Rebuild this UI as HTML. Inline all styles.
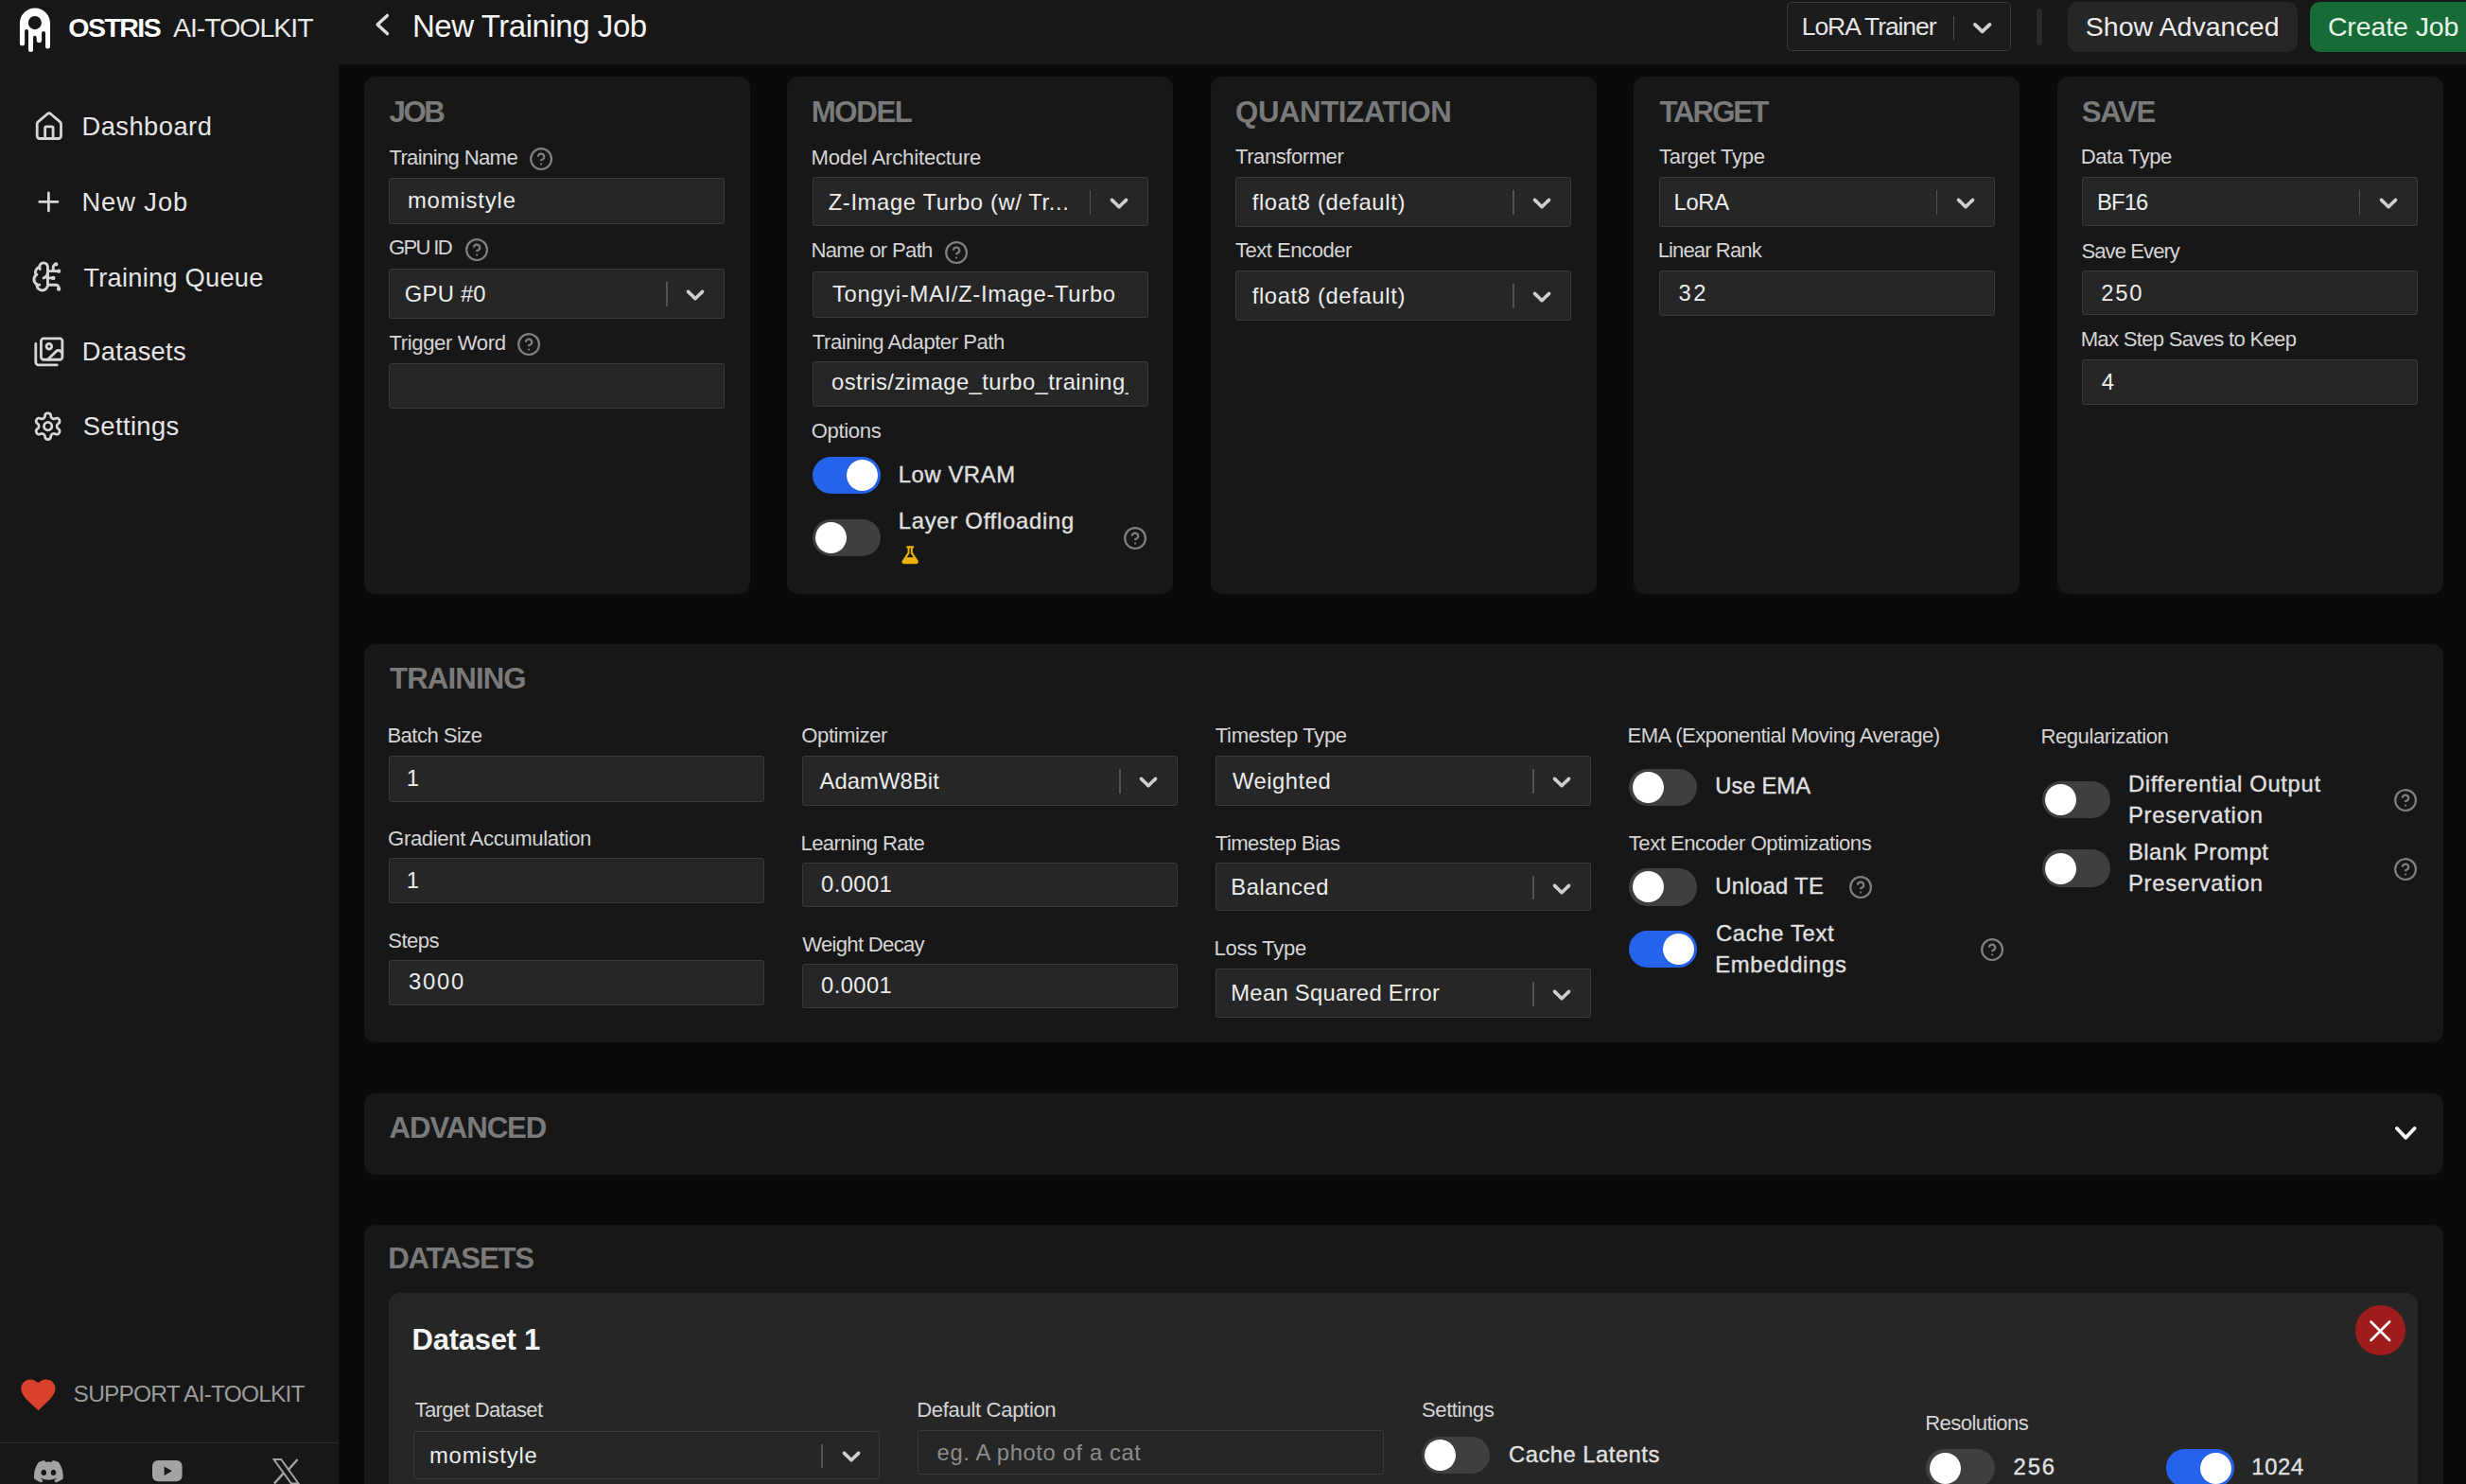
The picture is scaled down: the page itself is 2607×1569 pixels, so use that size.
<!DOCTYPE html>
<html><head><meta charset="utf-8"><title>New Training Job</title>
<style>
html,body{margin:0;padding:0;width:2607px;height:1569px;overflow:hidden;background:#0a0a0a;}
body{position:relative;font-family:"Liberation Sans",sans-serif;}
.t{position:absolute;white-space:nowrap;}
.r{position:absolute;box-sizing:border-box;}
.s{position:absolute;overflow:visible;}
</style></head><body>
<div class="r" style="left:0px;top:0px;width:2607px;height:68px;background:#171717"></div>
<div class="r" style="left:0px;top:68px;width:358px;height:1501px;background:#171717"></div>
<div class="r" style="left:358px;top:68px;width:2249px;height:1501px;background:#0a0a0a"></div>
<svg class="s" style="left:15px;top:5px;" width="50" height="55" viewBox="0 0 1349 1484"><path fill="#fff" d="M160 1100 L160 527 A432.5 432.5 0 0 1 1025 527 L1025 1188 A67.5 67.5 0 0 1 890 1188 L890 807 A52.5 52.5 0 0 0 785 807 L785 1013 A72.5 72.5 0 0 1 640 1013 L640 935 A50 50 0 0 0 540 935 L540 1282 A67.5 67.5 0 0 1 405 1282 L405 757 A52.5 52.5 0 0 0 300 757 L300 1100 A70 70 0 0 1 160 1100 Z"/><circle cx="590" cy="515" r="190" fill="#171717"/></svg>
<span class="t" style="left:72.36px;top:15.27px;font-size:28.5px;line-height:28.5px;color:#ffffff;font-weight:700;letter-spacing:-1.56px">OSTRIS</span>
<span class="t" style="left:182.93px;top:15.27px;font-size:28.5px;line-height:28.5px;color:#e8e8e8;letter-spacing:-1.01px">AI-TOOLKIT</span>
<svg class="s" style="left:390px;top:10px;fill:none;stroke:#dcdcdc;stroke-width:3.4;stroke-linecap:round;stroke-linejoin:round" width="28" height="30" viewBox="0 0 28 30"><path d="M19.4 6.4 9.1 16.1 19.4 25.6"/></svg>
<span class="t" style="left:435.98px;top:11.47px;font-size:33px;line-height:33px;color:#f5f5f5;letter-spacing:-0.45px">New Training Job</span>
<div class="r" style="left:1889.4px;top:2.4px;width:236.3px;height:52.1px;background:#1c1c1c;border:1px solid #3a3a3a;border-radius:5px"></div>
<span class="t" style="left:1904.81px;top:15.47px;font-size:26.5px;line-height:26.5px;color:#e5e5e5;letter-spacing:-1.09px">LoRA Trainer</span>
<div class="r" style="left:2064.5px;top:16.7px;width:1.8px;height:25.7px;background:#525252"></div>
<svg class="s" style="left:2078.84px;top:12.49px;fill:#cfcfcf" width="33.4" height="33.4" viewBox="0 0 20 20"><path d="M4.516 7.548c0.436-0.446 1.043-0.481 1.576 0l3.908 3.747 3.908-3.747c0.533-0.481 1.141-0.446 1.574 0 0.436 0.445 0.408 1.197 0 1.615-0.406 0.418-4.695 4.502-4.695 4.502-0.217 0.223-0.502 0.335-0.787 0.335s-0.57-0.112-0.789-0.335c0 0-4.287-4.084-4.695-4.502s-0.436-1.17 0-1.615z"/></svg>
<div class="r" style="left:2153px;top:9px;width:6px;height:39px;background:#2a2a2a;border-radius:3px"></div>
<div class="r" style="left:2186.3px;top:2.2px;width:242.7px;height:52.8px;background:#262626;border-radius:11px"></div>
<span class="t" style="left:2204.72px;top:13.97px;font-size:28.5px;line-height:28.5px;color:#ececec;letter-spacing:0.03px">Show Advanced</span>
<div class="r" style="left:2442.2px;top:2.2px;width:197.8px;height:52.8px;background:#176b36;border-radius:11px"></div>
<span class="t" style="left:2460.88px;top:13.97px;font-size:28.5px;line-height:28.5px;color:#e6f4e8;letter-spacing:-0.1px">Create Job</span>
<svg class="s" style="left:34.79px;top:116.89px;fill:none;stroke:#d6d6d6;stroke-width:2;stroke-linecap:round;stroke-linejoin:round" width="33.71" height="33.71" viewBox="0 0 24 24"><path d="M15 21v-8a1 1 0 0 0-1-1h-4a1 1 0 0 0-1 1v8"/><path d="M3 10a2 2 0 0 1 .709-1.528l7-5.999a2 2 0 0 1 2.582 0l7 5.999A2 2 0 0 1 21 10v9a2 2 0 0 1-2 2H5a2 2 0 0 1-2-2z"/></svg>
<span class="t" style="left:86.45px;top:120.49px;font-size:27.3px;line-height:27.3px;color:#e5e5e5;letter-spacing:0.48px">Dashboard</span>
<svg class="s" style="left:34.94px;top:197.34px;fill:none;stroke:#d6d6d6;stroke-width:2;stroke-linecap:round;stroke-linejoin:round" width="32.78" height="32.78" viewBox="0 0 24 24"><path d="M5 12h14"/><path d="M12 5v14"/></svg>
<span class="t" style="left:86.45px;top:200.29px;font-size:27.3px;line-height:27.3px;color:#e5e5e5;letter-spacing:0.92px">New Job</span>
<svg class="s" style="left:33.09px;top:274.82px;fill:none;stroke:#d6d6d6;stroke-width:2;stroke-linecap:round;stroke-linejoin:round" width="34.91" height="34.91" viewBox="0 0 24 24"><path d="M12 5a3 3 0 1 0-5.997.125 4 4 0 0 0-2.526 5.77 4 4 0 0 0 .556 6.588A4 4 0 1 0 12 18Z"/><path d="M9 13a4.5 4.5 0 0 0 3-4"/><path d="M6.003 5.125A3 3 0 0 0 6.401 6.5"/><path d="M3.477 10.896a4 4 0 0 1 .585-.396"/><path d="M6 18a4 4 0 0 1-1.967-.516"/><path d="M12 13h4"/><path d="M12 18h6a2 2 0 0 1 2 2v1"/><path d="M12 8h8"/><path d="M16 8V5a2 2 0 0 1 2-2"/><circle cx="16" cy="13" r=".5"/><circle cx="18" cy="3" r=".5"/><circle cx="20" cy="21" r=".5"/><circle cx="20" cy="8" r=".5"/></svg>
<span class="t" style="left:88.39px;top:279.59px;font-size:27.3px;line-height:27.3px;color:#e5e5e5;letter-spacing:0.22px">Training Queue</span>
<svg class="s" style="left:34.6px;top:354.6px;fill:none;stroke:#d6d6d6;stroke-width:2;stroke-linecap:round;stroke-linejoin:round" width="33.71" height="33.71" viewBox="0 0 24 24"><path d="M18 22H4a2 2 0 0 1-2-2V6"/><path d="m22 13-1.296-1.296a2.41 2.41 0 0 0-3.408 0L11 18"/><circle cx="12" cy="8" r="2"/><rect width="16" height="16" x="6" y="2" rx="2"/></svg>
<span class="t" style="left:86.75px;top:358.49px;font-size:27.3px;line-height:27.3px;color:#e5e5e5;letter-spacing:0.31px">Datasets</span>
<svg class="s" style="left:34.45px;top:434.01px;fill:none;stroke:#d6d6d6;stroke-width:2;stroke-linecap:round;stroke-linejoin:round" width="33.27" height="33.27" viewBox="0 0 24 24"><path d="M12.22 2h-.44a2 2 0 0 0-2 2v.18a2 2 0 0 1-1 1.73l-.43.25a2 2 0 0 1-2 0l-.15-.08a2 2 0 0 0-2.73.73l-.22.38a2 2 0 0 0 .73 2.73l.15.1a2 2 0 0 1 1 1.72v.51a2 2 0 0 1-1 1.74l-.15.09a2 2 0 0 0-.73 2.73l.22.38a2 2 0 0 0 2.73.73l.15-.08a2 2 0 0 1 2 0l.43.25a2 2 0 0 1 1 1.73V20a2 2 0 0 0 2 2h.44a2 2 0 0 0 2-2v-.18a2 2 0 0 1 1-1.73l.43-.25a2 2 0 0 1 2 0l.15.08a2 2 0 0 0 2.73-.73l.22-.39a2 2 0 0 0-.73-2.73l-.15-.08a2 2 0 0 1-1-1.74v-.5a2 2 0 0 1 1-1.74l.15-.09a2 2 0 0 0 .73-2.73l-.22-.38a2 2 0 0 0-2.73-.73l-.15.08a2 2 0 0 1-2 0l-.43-.25a2 2 0 0 1-1-1.73V4a2 2 0 0 0-2-2z"/><circle cx="12" cy="12" r="3"/></svg>
<span class="t" style="left:87.77px;top:437.19px;font-size:27.3px;line-height:27.3px;color:#e5e5e5;letter-spacing:0.39px">Settings</span>
<svg class="s" style="left:22.4px;top:1457.5px;" width="36.8" height="34" viewBox="0 0 24 22"><path d="M12 21.6 10.3 20C4.2 14.5 0.2 10.9 0.2 6.5 0.2 2.9 3 0.2 6.6 0.2c2 0 3.9.9 5.4 2.4C13.5 1.1 15.4.2 17.4.2 21 .2 23.8 2.9 23.8 6.5c0 4.4-4 8-10.1 13.5Z" fill="#d9412e"/></svg>
<span class="t" style="left:77.6px;top:1462.46px;font-size:24.5px;line-height:24.5px;color:#9c9c9c;letter-spacing:-0.81px">SUPPORT AI-TOOLKIT</span>
<div class="r" style="left:0px;top:1524.5px;width:358px;height:1.3px;background:#2c2c2c"></div>
<svg class="s" style="left:36px;top:1543.5px;" width="30.8" height="23.5" viewBox="0 0 127.14 96.36"><path fill="#a3a3a3" d="M107.7 8.07A105.15 105.15 0 0 0 81.47 0a72.06 72.06 0 0 0-3.36 6.83 97.68 97.68 0 0 0-29.11 0A72.37 72.37 0 0 0 45.64 0a105.89 105.89 0 0 0-26.25 8.09C2.79 32.65-1.71 56.6.54 80.21a105.73 105.73 0 0 0 32.17 16.15 77.7 77.7 0 0 0 6.89-11.11 68.42 68.42 0 0 1-10.85-5.18c.91-.66 1.8-1.34 2.66-2a75.57 75.57 0 0 0 64.32 0c.87.71 1.76 1.39 2.66 2a68.68 68.68 0 0 1-10.87 5.19 77 77 0 0 0 6.89 11.1 105.25 105.25 0 0 0 32.19-16.14c2.64-27.38-4.51-51.11-18.9-72.15ZM42.45 65.69C36.18 65.69 31 60 31 53s5-12.74 11.43-12.74S54 46 53.89 53s-5.05 12.69-11.44 12.69Zm42.24 0C78.41 65.69 73.25 60 73.25 53s5-12.74 11.44-12.74S96.23 46 96.12 53s-5.04 12.69-11.43 12.69Z"/></svg>
<svg class="s" style="left:160.6px;top:1544.4px;" width="31.6" height="22.3" viewBox="0 0 32 22.4"><rect x="0" y="0" width="32" height="22.4" rx="6" fill="#a3a3a3"/><path d="M12.8 6.4 21.2 11.2 12.8 16Z" fill="#171717"/></svg>
<svg class="s" style="left:288px;top:1541.6px;" width="29" height="27.4" viewBox="0 0 24 22.7"><path fill="none" stroke="#a3a3a3" stroke-width="1.6" d="M1.2 0.8h6.4l15.2 21.1h-6.4Z"/><path stroke="#a3a3a3" stroke-width="2" d="M22 0.8 13.6 10.3M1.6 22 10 12.5"/></svg>
<div class="r" style="left:385px;top:81px;width:408px;height:546.6px;background:#171717;border-radius:12px"></div>
<div class="r" style="left:832.2px;top:81px;width:408px;height:546.6px;background:#171717;border-radius:12px"></div>
<div class="r" style="left:1280px;top:81px;width:408px;height:546.6px;background:#171717;border-radius:12px"></div>
<div class="r" style="left:1727.3px;top:81px;width:408px;height:546.6px;background:#171717;border-radius:12px"></div>
<div class="r" style="left:2174.8px;top:81px;width:408px;height:546.6px;background:#171717;border-radius:12px"></div>
<span class="t" style="left:411.43px;top:102.59px;font-size:31.2px;line-height:31.2px;color:#7a7a7a;font-weight:700;letter-spacing:-2.36px">JOB</span>
<span class="t" style="left:411.4px;top:155.69px;font-size:22.1px;line-height:22.1px;color:#d4d4d4;letter-spacing:-0.65px">Training Name</span>
<svg class="s" style="left:558.91px;top:154.91px;fill:none;stroke:#7f7f7f;stroke-width:2;stroke-linecap:round;stroke-linejoin:round" width="26.18" height="26.18" viewBox="0 0 24 24"><circle cx="12" cy="12" r="10"/><path d="M9.09 9a3 3 0 0 1 5.83 1c0 2-3 3-3 3"/><path d="M12 17h.01"/></svg>
<div class="r" style="left:411.3px;top:188.1px;width:354.7px;height:48.5px;background:#262626;border:1px solid #3b3b3b;border-radius:2.5px"></div>
<span class="t" style="left:430.89px;top:199.65px;font-size:23.8px;line-height:23.8px;color:#ececec;letter-spacing:0.88px">momistyle</span>
<span class="t" style="left:410.89px;top:250.69px;font-size:22.1px;line-height:22.1px;color:#d4d4d4;letter-spacing:-1.68px">GPU ID</span>
<svg class="s" style="left:490.91px;top:250.91px;fill:none;stroke:#7f7f7f;stroke-width:2;stroke-linecap:round;stroke-linejoin:round" width="26.18" height="26.18" viewBox="0 0 24 24"><circle cx="12" cy="12" r="10"/><path d="M9.09 9a3 3 0 0 1 5.83 1c0 2-3 3-3 3"/><path d="M12 17h.01"/></svg>
<div class="r" style="left:411.3px;top:284px;width:354.7px;height:52.5px;background:#262626;border:1px solid #3b3b3b;border-radius:2.5px"></div>
<span class="t" style="left:427.81px;top:298.75px;font-size:23.8px;line-height:23.8px;color:#ececec;letter-spacing:0.23px">GPU #0</span>
<div class="r" style="left:704px;top:298px;width:1.8px;height:26px;background:#525252"></div>
<svg class="s" style="left:719.4px;top:295.1px;fill:#cfcfcf" width="32.11" height="32.11" viewBox="0 0 20 20"><path d="M4.516 7.548c0.436-0.446 1.043-0.481 1.576 0l3.908 3.747 3.908-3.747c0.533-0.481 1.141-0.446 1.574 0 0.436 0.445 0.408 1.197 0 1.615-0.406 0.418-4.695 4.502-4.695 4.502-0.217 0.223-0.502 0.335-0.787 0.335s-0.57-0.112-0.789-0.335c0 0-4.287-4.084-4.695-4.502s-0.436-1.17 0-1.615z"/></svg>
<span class="t" style="left:411.5px;top:351.69px;font-size:22.1px;line-height:22.1px;color:#d4d4d4;letter-spacing:-0.38px">Trigger Word</span>
<svg class="s" style="left:546.21px;top:350.91px;fill:none;stroke:#7f7f7f;stroke-width:2;stroke-linecap:round;stroke-linejoin:round" width="26.18" height="26.18" viewBox="0 0 24 24"><circle cx="12" cy="12" r="10"/><path d="M9.09 9a3 3 0 0 1 5.83 1c0 2-3 3-3 3"/><path d="M12 17h.01"/></svg>
<div class="r" style="left:411.3px;top:384.2px;width:354.7px;height:48.3px;background:#262626;border:1px solid #3b3b3b;border-radius:2.5px"></div>
<span class="t" style="left:857.69px;top:102.59px;font-size:31.2px;line-height:31.2px;color:#7a7a7a;font-weight:700;letter-spacing:-1.35px">MODEL</span>
<span class="t" style="left:857.48px;top:155.69px;font-size:22.1px;line-height:22.1px;color:#d4d4d4;letter-spacing:-0.18px">Model Architecture</span>
<div class="r" style="left:859.3px;top:187px;width:354.3px;height:52.4px;background:#262626;border:1px solid #3b3b3b;border-radius:2.5px"></div>
<span class="t" style="left:875.73px;top:201.75px;font-size:23.8px;line-height:23.8px;color:#ececec;letter-spacing:0.61px">Z-Image Turbo (w/ Tr...</span>
<div class="r" style="left:1151.6px;top:201px;width:1.8px;height:25.9px;background:#525252"></div>
<svg class="s" style="left:1167px;top:198.05px;fill:#cfcfcf" width="32.11" height="32.11" viewBox="0 0 20 20"><path d="M4.516 7.548c0.436-0.446 1.043-0.481 1.576 0l3.908 3.747 3.908-3.747c0.533-0.481 1.141-0.446 1.574 0 0.436 0.445 0.408 1.197 0 1.615-0.406 0.418-4.695 4.502-4.695 4.502-0.217 0.223-0.502 0.335-0.787 0.335s-0.57-0.112-0.789-0.335c0 0-4.287-4.084-4.695-4.502s-0.436-1.17 0-1.615z"/></svg>
<span class="t" style="left:857.48px;top:254.29px;font-size:22.1px;line-height:22.1px;color:#d4d4d4;letter-spacing:-0.67px">Name or Path</span>
<svg class="s" style="left:997.91px;top:254.11px;fill:none;stroke:#7f7f7f;stroke-width:2;stroke-linecap:round;stroke-linejoin:round" width="26.18" height="26.18" viewBox="0 0 24 24"><circle cx="12" cy="12" r="10"/><path d="M9.09 9a3 3 0 0 1 5.83 1c0 2-3 3-3 3"/><path d="M12 17h.01"/></svg>
<div class="r" style="left:859.3px;top:287.1px;width:354.3px;height:48.5px;background:#262626;border:1px solid #3b3b3b;border-radius:2.5px"></div>
<span class="t" style="left:879.96px;top:298.75px;font-size:23.8px;line-height:23.8px;color:#ececec;letter-spacing:0.68px">Tongyi-MAI/Z-Image-Turbo</span>
<span class="t" style="left:858.8px;top:350.69px;font-size:22.1px;line-height:22.1px;color:#d4d4d4;letter-spacing:-0.47px">Training Adapter Path</span>
<div class="r" style="left:859.3px;top:382.1px;width:354.3px;height:47.5px;background:#262626;border:1px solid #3b3b3b;border-radius:2.5px"></div>
<div class="r" style="left:860.3px;top:383.1px;width:332.5px;height:45.5px;overflow:hidden">
<span class="t" style="left:18.69px;top:8.65px;font-size:23.8px;line-height:23.8px;color:#ececec;letter-spacing:0.42px">ostris/zimage_turbo_training_adapter</span>
</div>
<span class="t" style="left:857.75px;top:444.59px;font-size:22.1px;line-height:22.1px;color:#d4d4d4;letter-spacing:-0.36px">Options</span>
<div class="r" style="left:858.8px;top:482.7px;width:72.2px;height:39.4px;background:#2563eb;border-radius:19.7px"></div>
<div class="r" style="left:894.8px;top:485.9px;width:33px;height:33px;background:#ffffff;border-radius:16.5px"></div>
<span class="t" style="left:949.74px;top:489.65px;font-size:23.8px;line-height:23.8px;color:#e0e0e0;letter-spacing:0.6px;-webkit-text-stroke:0.35px #e0e0e0">Low VRAM</span>
<div class="r" style="left:858.8px;top:548.6px;width:72.2px;height:39.4px;background:#3f3f3f;border-radius:19.7px"></div>
<div class="r" style="left:862px;top:551.8px;width:33px;height:33px;background:#ffffff;border-radius:16.5px"></div>
<span class="t" style="left:949.74px;top:538.85px;font-size:23.8px;line-height:23.8px;color:#e0e0e0;letter-spacing:0.75px;-webkit-text-stroke:0.35px #e0e0e0">Layer Offloading</span>
<svg class="s" style="left:952.4px;top:576px;" width="20.4" height="20.7" viewBox="0 0 20 20"><path d="M6.2 1.2h7.6v2.2h-1.2v4.6l5.6 8.4c.9 1.4 0 3.2-1.7 3.2H3.5c-1.7 0-2.6-1.8-1.7-3.2l5.6-8.4V3.4H6.2Z" fill="#eab308"/><path d="M9.4 3.4v5.2L6.6 12.8h6.8l-2.8-4.2V3.4Z" fill="#171717"/></svg>
<svg class="s" style="left:1186.91px;top:556.21px;fill:none;stroke:#7f7f7f;stroke-width:2;stroke-linecap:round;stroke-linejoin:round" width="26.18" height="26.18" viewBox="0 0 24 24"><circle cx="12" cy="12" r="10"/><path d="M9.09 9a3 3 0 0 1 5.83 1c0 2-3 3-3 3"/><path d="M12 17h.01"/></svg>
<span class="t" style="left:1306.05px;top:102.59px;font-size:31.2px;line-height:31.2px;color:#7a7a7a;font-weight:700;letter-spacing:-0.42px">QUANTIZATION</span>
<span class="t" style="left:1306px;top:155.19px;font-size:22.1px;line-height:22.1px;color:#d4d4d4;letter-spacing:-0.47px">Transformer</span>
<div class="r" style="left:1306.3px;top:187px;width:354.7px;height:52.6px;background:#262626;border:1px solid #3b3b3b;border-radius:2.5px"></div>
<span class="t" style="left:1323.64px;top:202.25px;font-size:23.8px;line-height:23.8px;color:#ececec;letter-spacing:0.64px">float8 (default)</span>
<div class="r" style="left:1599px;top:201px;width:1.8px;height:26.1px;background:#525252"></div>
<svg class="s" style="left:1614.4px;top:198.15px;fill:#cfcfcf" width="32.11" height="32.11" viewBox="0 0 20 20"><path d="M4.516 7.548c0.436-0.446 1.043-0.481 1.576 0l3.908 3.747 3.908-3.747c0.533-0.481 1.141-0.446 1.574 0 0.436 0.445 0.408 1.197 0 1.615-0.406 0.418-4.695 4.502-4.695 4.502-0.217 0.223-0.502 0.335-0.787 0.335s-0.57-0.112-0.789-0.335c0 0-4.287-4.084-4.695-4.502s-0.436-1.17 0-1.615z"/></svg>
<span class="t" style="left:1306px;top:254.29px;font-size:22.1px;line-height:22.1px;color:#d4d4d4;letter-spacing:-0.51px">Text Encoder</span>
<div class="r" style="left:1306.3px;top:286px;width:354.7px;height:52.6px;background:#262626;border:1px solid #3b3b3b;border-radius:2.5px"></div>
<span class="t" style="left:1323.64px;top:301.25px;font-size:23.8px;line-height:23.8px;color:#ececec;letter-spacing:0.64px">float8 (default)</span>
<div class="r" style="left:1599px;top:300px;width:1.8px;height:26.1px;background:#525252"></div>
<svg class="s" style="left:1614.4px;top:297.15px;fill:#cfcfcf" width="32.11" height="32.11" viewBox="0 0 20 20"><path d="M4.516 7.548c0.436-0.446 1.043-0.481 1.576 0l3.908 3.747 3.908-3.747c0.533-0.481 1.141-0.446 1.574 0 0.436 0.445 0.408 1.197 0 1.615-0.406 0.418-4.695 4.502-4.695 4.502-0.217 0.223-0.502 0.335-0.787 0.335s-0.57-0.112-0.789-0.335c0 0-4.287-4.084-4.695-4.502s-0.436-1.17 0-1.615z"/></svg>
<span class="t" style="left:1754.39px;top:102.59px;font-size:31.2px;line-height:31.2px;color:#7a7a7a;font-weight:700;letter-spacing:-2.01px">TARGET</span>
<span class="t" style="left:1754px;top:155.29px;font-size:22.1px;line-height:22.1px;color:#d4d4d4;letter-spacing:-0.31px">Target Type</span>
<div class="r" style="left:1754.3px;top:187px;width:354.3px;height:52.6px;background:#262626;border:1px solid #3b3b3b;border-radius:2.5px"></div>
<span class="t" style="left:1769.54px;top:202.05px;font-size:23.8px;line-height:23.8px;color:#ececec;letter-spacing:-0.35px">LoRA</span>
<div class="r" style="left:2046.6px;top:201px;width:1.8px;height:26.1px;background:#525252"></div>
<svg class="s" style="left:2062px;top:198.15px;fill:#cfcfcf" width="32.11" height="32.11" viewBox="0 0 20 20"><path d="M4.516 7.548c0.436-0.446 1.043-0.481 1.576 0l3.908 3.747 3.908-3.747c0.533-0.481 1.141-0.446 1.574 0 0.436 0.445 0.408 1.197 0 1.615-0.406 0.418-4.695 4.502-4.695 4.502-0.217 0.223-0.502 0.335-0.787 0.335s-0.57-0.112-0.789-0.335c0 0-4.287-4.084-4.695-4.502s-0.436-1.17 0-1.615z"/></svg>
<span class="t" style="left:1752.68px;top:254.29px;font-size:22.1px;line-height:22.1px;color:#d4d4d4;letter-spacing:-0.91px">Linear Rank</span>
<div class="r" style="left:1754.3px;top:286px;width:354.3px;height:47.6px;background:#262626;border:1px solid #3b3b3b;border-radius:2.5px"></div>
<span class="t" style="left:1774.61px;top:297.85px;font-size:23.8px;line-height:23.8px;color:#ececec;letter-spacing:2.36px">32</span>
<span class="t" style="left:2200.86px;top:102.99px;font-size:31.2px;line-height:31.2px;color:#7a7a7a;font-weight:700;letter-spacing:-1.43px">SAVE</span>
<span class="t" style="left:2199.68px;top:155.49px;font-size:22.1px;line-height:22.1px;color:#d4d4d4;letter-spacing:-0.45px">Data Type</span>
<div class="r" style="left:2201px;top:187.2px;width:354.6px;height:52.1px;background:#262626;border:1px solid #3b3b3b;border-radius:2.5px"></div>
<span class="t" style="left:2217.04px;top:201.85px;font-size:23.8px;line-height:23.8px;color:#ececec;letter-spacing:-0.9px">BF16</span>
<div class="r" style="left:2493.6px;top:201.2px;width:1.8px;height:25.6px;background:#525252"></div>
<svg class="s" style="left:2509px;top:198.1px;fill:#cfcfcf" width="32.11" height="32.11" viewBox="0 0 20 20"><path d="M4.516 7.548c0.436-0.446 1.043-0.481 1.576 0l3.908 3.747 3.908-3.747c0.533-0.481 1.141-0.446 1.574 0 0.436 0.445 0.408 1.197 0 1.615-0.406 0.418-4.695 4.502-4.695 4.502-0.217 0.223-0.502 0.335-0.787 0.335s-0.57-0.112-0.789-0.335c0 0-4.287-4.084-4.695-4.502s-0.436-1.17 0-1.615z"/></svg>
<span class="t" style="left:2200.51px;top:254.59px;font-size:22.1px;line-height:22.1px;color:#d4d4d4;letter-spacing:-0.95px">Save Every</span>
<div class="r" style="left:2201px;top:286.2px;width:354.6px;height:47.2px;background:#262626;border:1px solid #3b3b3b;border-radius:2.5px"></div>
<span class="t" style="left:2221.21px;top:297.85px;font-size:23.8px;line-height:23.8px;color:#ececec;letter-spacing:1.8px">250</span>
<span class="t" style="left:2199.68px;top:348.29px;font-size:22.1px;line-height:22.1px;color:#d4d4d4;letter-spacing:-0.71px">Max Step Saves to Keep</span>
<div class="r" style="left:2201px;top:380px;width:354.6px;height:48.4px;background:#262626;border:1px solid #3b3b3b;border-radius:2.5px"></div>
<span class="t" style="left:2221.86px;top:391.85px;font-size:23.8px;line-height:23.8px;color:#ececec">4</span>
<div class="r" style="left:385px;top:681.4px;width:2198px;height:420.6px;background:#171717;border-radius:12px"></div>
<span class="t" style="left:412.09px;top:701.79px;font-size:31.2px;line-height:31.2px;color:#7a7a7a;font-weight:700;letter-spacing:-0.89px">TRAINING</span>
<span class="t" style="left:409.38px;top:767.39px;font-size:22.1px;line-height:22.1px;color:#d4d4d4;letter-spacing:-0.54px">Batch Size</span>
<div class="r" style="left:411.2px;top:799px;width:396.6px;height:48.5px;background:#262626;border:1px solid #3b3b3b;border-radius:2.5px"></div>
<span class="t" style="left:429.81px;top:810.85px;font-size:23.8px;line-height:23.8px;color:#ececec">1</span>
<span class="t" style="left:410.09px;top:875.79px;font-size:22.1px;line-height:22.1px;color:#d4d4d4;letter-spacing:-0.35px">Gradient Accumulation</span>
<div class="r" style="left:411.2px;top:907.4px;width:396.6px;height:47.3px;background:#262626;border:1px solid #3b3b3b;border-radius:2.5px"></div>
<span class="t" style="left:429.81px;top:918.85px;font-size:23.8px;line-height:23.8px;color:#ececec">1</span>
<span class="t" style="left:410.21px;top:983.79px;font-size:22.1px;line-height:22.1px;color:#d4d4d4;letter-spacing:-0.54px">Steps</span>
<div class="r" style="left:411.2px;top:1015.4px;width:396.6px;height:47.3px;background:#262626;border:1px solid #3b3b3b;border-radius:2.5px"></div>
<span class="t" style="left:431.91px;top:1026.05px;font-size:23.8px;line-height:23.8px;color:#ececec;letter-spacing:1.8px">3000</span>
<span class="t" style="left:847.25px;top:767.29px;font-size:22.1px;line-height:22.1px;color:#d4d4d4;letter-spacing:-0.42px">Optimizer</span>
<div class="r" style="left:848.3px;top:799px;width:396.6px;height:52.6px;background:#262626;border:1px solid #3b3b3b;border-radius:2.5px"></div>
<span class="t" style="left:866.44px;top:813.95px;font-size:23.8px;line-height:23.8px;color:#ececec;letter-spacing:0.1px">AdamW8Bit</span>
<div class="r" style="left:1182.9px;top:813px;width:1.8px;height:26.1px;background:#525252"></div>
<svg class="s" style="left:1198.3px;top:810.15px;fill:#cfcfcf" width="32.11" height="32.11" viewBox="0 0 20 20"><path d="M4.516 7.548c0.436-0.446 1.043-0.481 1.576 0l3.908 3.747 3.908-3.747c0.533-0.481 1.141-0.446 1.574 0 0.436 0.445 0.408 1.197 0 1.615-0.406 0.418-4.695 4.502-4.695 4.502-0.217 0.223-0.502 0.335-0.787 0.335s-0.57-0.112-0.789-0.335c0 0-4.287-4.084-4.695-4.502s-0.436-1.17 0-1.615z"/></svg>
<span class="t" style="left:846.48px;top:880.69px;font-size:22.1px;line-height:22.1px;color:#d4d4d4;letter-spacing:-0.62px">Learning Rate</span>
<div class="r" style="left:848.3px;top:912.2px;width:396.6px;height:47.3px;background:#262626;border:1px solid #3b3b3b;border-radius:2.5px"></div>
<span class="t" style="left:868.05px;top:923.15px;font-size:23.8px;line-height:23.8px;color:#ececec;letter-spacing:0.4px">0.0001</span>
<span class="t" style="left:848.19px;top:988.19px;font-size:22.1px;line-height:22.1px;color:#d4d4d4;letter-spacing:-0.7px">Weight Decay</span>
<div class="r" style="left:848.3px;top:1019px;width:396.6px;height:47.3px;background:#262626;border:1px solid #3b3b3b;border-radius:2.5px"></div>
<span class="t" style="left:868.05px;top:1030.05px;font-size:23.8px;line-height:23.8px;color:#ececec;letter-spacing:0.4px">0.0001</span>
<span class="t" style="left:1284.8px;top:767.29px;font-size:22.1px;line-height:22.1px;color:#d4d4d4;letter-spacing:-0.36px">Timestep Type</span>
<div class="r" style="left:1285.3px;top:799px;width:396.6px;height:52.6px;background:#262626;border:1px solid #3b3b3b;border-radius:2.5px"></div>
<span class="t" style="left:1303.08px;top:813.95px;font-size:23.8px;line-height:23.8px;color:#ececec;letter-spacing:0.49px">Weighted</span>
<div class="r" style="left:1619.9px;top:813px;width:1.8px;height:26.1px;background:#525252"></div>
<svg class="s" style="left:1635.3px;top:810.15px;fill:#cfcfcf" width="32.11" height="32.11" viewBox="0 0 20 20"><path d="M4.516 7.548c0.436-0.446 1.043-0.481 1.576 0l3.908 3.747 3.908-3.747c0.533-0.481 1.141-0.446 1.574 0 0.436 0.445 0.408 1.197 0 1.615-0.406 0.418-4.695 4.502-4.695 4.502-0.217 0.223-0.502 0.335-0.787 0.335s-0.57-0.112-0.789-0.335c0 0-4.287-4.084-4.695-4.502s-0.436-1.17 0-1.615z"/></svg>
<span class="t" style="left:1284.8px;top:880.69px;font-size:22.1px;line-height:22.1px;color:#d4d4d4;letter-spacing:-0.58px">Timestep Bias</span>
<div class="r" style="left:1285.3px;top:912.2px;width:396.6px;height:51px;background:#262626;border:1px solid #3b3b3b;border-radius:2.5px"></div>
<span class="t" style="left:1301.24px;top:926.05px;font-size:23.8px;line-height:23.8px;color:#ececec;letter-spacing:0.57px">Balanced</span>
<div class="r" style="left:1619.9px;top:926.2px;width:1.8px;height:24.5px;background:#525252"></div>
<svg class="s" style="left:1635.3px;top:922.55px;fill:#cfcfcf" width="32.11" height="32.11" viewBox="0 0 20 20"><path d="M4.516 7.548c0.436-0.446 1.043-0.481 1.576 0l3.908 3.747 3.908-3.747c0.533-0.481 1.141-0.446 1.574 0 0.436 0.445 0.408 1.197 0 1.615-0.406 0.418-4.695 4.502-4.695 4.502-0.217 0.223-0.502 0.335-0.787 0.335s-0.57-0.112-0.789-0.335c0 0-4.287-4.084-4.695-4.502s-0.436-1.17 0-1.615z"/></svg>
<span class="t" style="left:1283.48px;top:991.79px;font-size:22.1px;line-height:22.1px;color:#d4d4d4;letter-spacing:-0.31px">Loss Type</span>
<div class="r" style="left:1285.3px;top:1024.3px;width:396.6px;height:52.2px;background:#262626;border:1px solid #3b3b3b;border-radius:2.5px"></div>
<span class="t" style="left:1301.24px;top:1038.45px;font-size:23.8px;line-height:23.8px;color:#ececec;letter-spacing:0.3px">Mean Squared Error</span>
<div class="r" style="left:1619.9px;top:1038.3px;width:1.8px;height:25.7px;background:#525252"></div>
<svg class="s" style="left:1635.3px;top:1035.25px;fill:#cfcfcf" width="32.11" height="32.11" viewBox="0 0 20 20"><path d="M4.516 7.548c0.436-0.446 1.043-0.481 1.576 0l3.908 3.747 3.908-3.747c0.533-0.481 1.141-0.446 1.574 0 0.436 0.445 0.408 1.197 0 1.615-0.406 0.418-4.695 4.502-4.695 4.502-0.217 0.223-0.502 0.335-0.787 0.335s-0.57-0.112-0.789-0.335c0 0-4.287-4.084-4.695-4.502s-0.436-1.17 0-1.615z"/></svg>
<span class="t" style="left:1720.48px;top:767.29px;font-size:22.1px;line-height:22.1px;color:#d4d4d4;letter-spacing:-0.53px">EMA (Exponential Moving Average)</span>
<div class="r" style="left:1722.3px;top:812.6px;width:72.2px;height:39.4px;background:#3f3f3f;border-radius:19.7px"></div>
<div class="r" style="left:1725.5px;top:815.8px;width:33px;height:33px;background:#ffffff;border-radius:16.5px"></div>
<span class="t" style="left:1813.36px;top:819.35px;font-size:23.8px;line-height:23.8px;color:#e0e0e0;letter-spacing:0.03px;-webkit-text-stroke:0.35px #e0e0e0">Use EMA</span>
<span class="t" style="left:1721.8px;top:880.69px;font-size:22.1px;line-height:22.1px;color:#d4d4d4;letter-spacing:-0.48px">Text Encoder Optimizations</span>
<div class="r" style="left:1722.3px;top:918.2px;width:72.2px;height:39.4px;background:#3f3f3f;border-radius:19.7px"></div>
<div class="r" style="left:1725.5px;top:921.4px;width:33px;height:33px;background:#ffffff;border-radius:16.5px"></div>
<span class="t" style="left:1813.36px;top:924.85px;font-size:23.8px;line-height:23.8px;color:#e0e0e0;letter-spacing:0.3px;-webkit-text-stroke:0.35px #e0e0e0">Unload TE</span>
<svg class="s" style="left:1953.61px;top:925.21px;fill:none;stroke:#7f7f7f;stroke-width:2;stroke-linecap:round;stroke-linejoin:round" width="26.18" height="26.18" viewBox="0 0 24 24"><circle cx="12" cy="12" r="10"/><path d="M9.09 9a3 3 0 0 1 5.83 1c0 2-3 3-3 3"/><path d="M12 17h.01"/></svg>
<div class="r" style="left:1722.3px;top:984px;width:72.2px;height:39.4px;background:#2563eb;border-radius:19.7px"></div>
<div class="r" style="left:1758.3px;top:987.2px;width:33px;height:33px;background:#ffffff;border-radius:16.5px"></div>
<span class="t" style="left:1814.01px;top:974.55px;font-size:23.8px;line-height:23.8px;color:#e0e0e0;letter-spacing:0.67px;-webkit-text-stroke:0.35px #e0e0e0">Cache Text</span>
<span class="t" style="left:1813.24px;top:1007.85px;font-size:23.8px;line-height:23.8px;color:#e0e0e0;letter-spacing:0.7px;-webkit-text-stroke:0.35px #e0e0e0">Embeddings</span>
<svg class="s" style="left:2092.61px;top:991.21px;fill:none;stroke:#7f7f7f;stroke-width:2;stroke-linecap:round;stroke-linejoin:round" width="26.18" height="26.18" viewBox="0 0 24 24"><circle cx="12" cy="12" r="10"/><path d="M9.09 9a3 3 0 0 1 5.83 1c0 2-3 3-3 3"/><path d="M12 17h.01"/></svg>
<span class="t" style="left:2157.38px;top:767.89px;font-size:22.1px;line-height:22.1px;color:#d4d4d4;letter-spacing:-0.44px">Regularization</span>
<div class="r" style="left:2159.2px;top:825.9px;width:72.2px;height:39.4px;background:#3f3f3f;border-radius:19.7px"></div>
<div class="r" style="left:2162.4px;top:829.1px;width:33px;height:33px;background:#ffffff;border-radius:16.5px"></div>
<span class="t" style="left:2249.94px;top:816.65px;font-size:23.8px;line-height:23.8px;color:#e0e0e0;letter-spacing:0.65px;-webkit-text-stroke:0.35px #e0e0e0">Differential Output</span>
<span class="t" style="left:2249.94px;top:849.85px;font-size:23.8px;line-height:23.8px;color:#e0e0e0;letter-spacing:0.76px;-webkit-text-stroke:0.35px #e0e0e0">Preservation</span>
<svg class="s" style="left:2529.91px;top:833.11px;fill:none;stroke:#7f7f7f;stroke-width:2;stroke-linecap:round;stroke-linejoin:round" width="26.18" height="26.18" viewBox="0 0 24 24"><circle cx="12" cy="12" r="10"/><path d="M9.09 9a3 3 0 0 1 5.83 1c0 2-3 3-3 3"/><path d="M12 17h.01"/></svg>
<div class="r" style="left:2159.2px;top:898.4px;width:72.2px;height:39.4px;background:#3f3f3f;border-radius:19.7px"></div>
<div class="r" style="left:2162.4px;top:901.6px;width:33px;height:33px;background:#ffffff;border-radius:16.5px"></div>
<span class="t" style="left:2249.94px;top:888.85px;font-size:23.8px;line-height:23.8px;color:#e0e0e0;letter-spacing:0.47px;-webkit-text-stroke:0.35px #e0e0e0">Blank Prompt</span>
<span class="t" style="left:2249.94px;top:922.15px;font-size:23.8px;line-height:23.8px;color:#e0e0e0;letter-spacing:0.76px;-webkit-text-stroke:0.35px #e0e0e0">Preservation</span>
<svg class="s" style="left:2529.91px;top:905.91px;fill:none;stroke:#7f7f7f;stroke-width:2;stroke-linecap:round;stroke-linejoin:round" width="26.18" height="26.18" viewBox="0 0 24 24"><circle cx="12" cy="12" r="10"/><path d="M9.09 9a3 3 0 0 1 5.83 1c0 2-3 3-3 3"/><path d="M12 17h.01"/></svg>
<div class="r" style="left:385px;top:1156px;width:2198px;height:86px;background:#171717;border-radius:12px"></div>
<span class="t" style="left:411.62px;top:1176.79px;font-size:31.2px;line-height:31.2px;color:#7a7a7a;font-weight:700;letter-spacing:-1.11px">ADVANCED</span>
<svg class="s" style="left:2531.9px;top:1190.8px;fill:none;stroke:#f5f5f5;stroke-width:3.8;stroke-linecap:round;stroke-linejoin:round" width="22.6" height="14.5" viewBox="0 0 22.6 14.5"><path d="M2 2 11.3 11.9 20.6 2"/></svg>
<div class="r" style="left:385px;top:1294.7px;width:2198px;height:325.3px;background:#171717;border-radius:12px"></div>
<span class="t" style="left:410.29px;top:1315.19px;font-size:31.2px;line-height:31.2px;color:#7a7a7a;font-weight:700;letter-spacing:-1.23px">DATASETS</span>
<div class="r" style="left:411px;top:1367px;width:2144.8px;height:273px;background:#262626;border-radius:12px"></div>
<span class="t" style="left:435.61px;top:1401.36px;font-size:31px;line-height:31px;color:#f5f5f5;font-weight:700;letter-spacing:-0.28px">Dataset 1</span>
<div class="r" style="left:2489.8px;top:1379.7px;width:53.4px;height:53.4px;background:#a01c1c;border-radius:27px"></div>
<svg class="s" style="left:2505.3px;top:1395.7px;" width="22.7" height="22.6" viewBox="0 0 22 22"><path d="M1.5 1.5 20.5 20.5M20.5 1.5 1.5 20.5" stroke="#fff" stroke-width="2.6" stroke-linecap="round"/></svg>
<span class="t" style="left:438.5px;top:1480.49px;font-size:22.1px;line-height:22.1px;color:#d4d4d4;letter-spacing:-0.62px">Target Dataset</span>
<div class="r" style="left:437.2px;top:1512.6px;width:493.2px;height:51.8px;background:#262626;border:1px solid #3a3a3a;border-radius:2.5px"></div>
<span class="t" style="left:453.89px;top:1526.75px;font-size:23.8px;line-height:23.8px;color:#ececec;letter-spacing:0.86px">momistyle</span>
<div class="r" style="left:868.4px;top:1526.6px;width:1.8px;height:25.3px;background:#525252"></div>
<svg class="s" style="left:883.8px;top:1523.35px;fill:#cfcfcf" width="32.11" height="32.11" viewBox="0 0 20 20"><path d="M4.516 7.548c0.436-0.446 1.043-0.481 1.576 0l3.908 3.747 3.908-3.747c0.533-0.481 1.141-0.446 1.574 0 0.436 0.445 0.408 1.197 0 1.615-0.406 0.418-4.695 4.502-4.695 4.502-0.217 0.223-0.502 0.335-0.787 0.335s-0.57-0.112-0.789-0.335c0 0-4.287-4.084-4.695-4.502s-0.436-1.17 0-1.615z"/></svg>
<span class="t" style="left:969.28px;top:1480.49px;font-size:22.1px;line-height:22.1px;color:#d4d4d4;letter-spacing:-0.35px">Default Caption</span>
<div class="r" style="left:970.3px;top:1512.3px;width:493.1px;height:47.2px;background:#262626;border:1px solid #3a3a3a;border-radius:2.5px"></div>
<span class="t" style="left:990.59px;top:1523.55px;font-size:23.8px;line-height:23.8px;color:#8c8c8c;letter-spacing:0.61px">eg. A photo of a cat</span>
<span class="t" style="left:1503.01px;top:1480.49px;font-size:22.1px;line-height:22.1px;color:#d4d4d4;letter-spacing:-0.44px">Settings</span>
<div class="r" style="left:1503.2px;top:1518.8px;width:72.2px;height:39.4px;background:#3f3f3f;border-radius:19.7px"></div>
<div class="r" style="left:1506.4px;top:1522px;width:33px;height:33px;background:#ffffff;border-radius:16.5px"></div>
<span class="t" style="left:1595.01px;top:1525.65px;font-size:23.8px;line-height:23.8px;color:#e0e0e0;letter-spacing:0.49px;-webkit-text-stroke:0.35px #e0e0e0">Cache Latents</span>
<span class="t" style="left:2035.18px;top:1493.89px;font-size:22.1px;line-height:22.1px;color:#d4d4d4;letter-spacing:-0.59px">Resolutions</span>
<div class="r" style="left:2036.4px;top:1532.3px;width:72.2px;height:39.4px;background:#3f3f3f;border-radius:19.7px"></div>
<div class="r" style="left:2039.6px;top:1535.5px;width:33px;height:33px;background:#ffffff;border-radius:16.5px"></div>
<span class="t" style="left:2128.51px;top:1538.85px;font-size:23.8px;line-height:23.8px;color:#e0e0e0;letter-spacing:1.91px;-webkit-text-stroke:0.35px #e0e0e0">256</span>
<div class="r" style="left:2290px;top:1532.3px;width:72.2px;height:39.4px;background:#2563eb;border-radius:19.7px"></div>
<div class="r" style="left:2326px;top:1535.5px;width:33px;height:33px;background:#ffffff;border-radius:16.5px"></div>
<span class="t" style="left:2380.22px;top:1538.85px;font-size:23.8px;line-height:23.8px;color:#e0e0e0;letter-spacing:0.68px;-webkit-text-stroke:0.35px #e0e0e0">1024</span>
</body></html>
